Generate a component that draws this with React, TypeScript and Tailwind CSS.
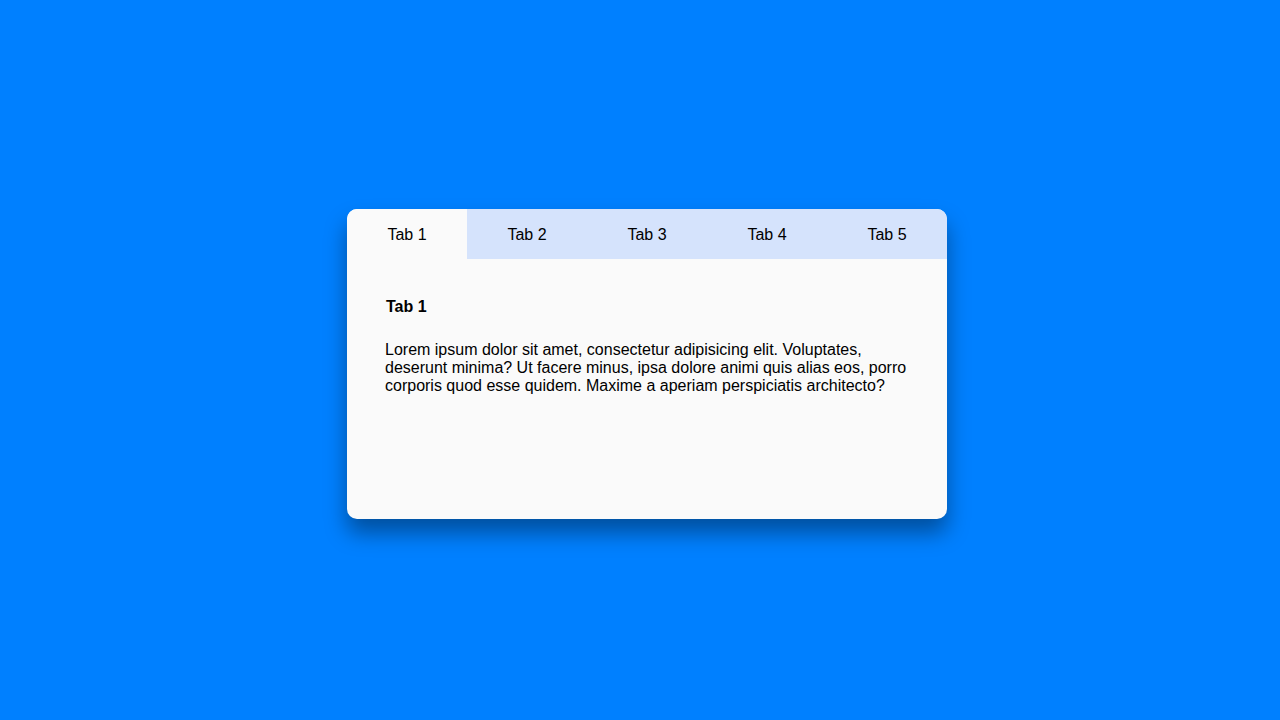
import { useState } from "react";

const tabs = ["Tab 1", "Tab 2", "Tab 3", "Tab 4", "Tab 5"];

const body =
  "Lorem ipsum dolor sit amet, consectetur adipisicing elit. Voluptates, deserunt minima? Ut facere minus, ipsa dolore animi quis alias eos, porro corporis quod esse quidem. Maxime a aperiam perspiciatis architecto?";

export default function App() {
  const [active, setActive] = useState(0);

  return (
    <div className="flex h-[720px] w-full items-center justify-center bg-[#0080ff] pl-[14px] pt-[8px] font-['Liberation_Sans',Arial,sans-serif] text-black">
      <div className="h-[310px] w-[600px] overflow-hidden rounded-[10px] bg-[#fafafa] shadow-[0_14px_22px_rgba(0,0,0,0.38)]">
        <div className="flex h-[50px]">
          {tabs.map((t, i) => (
            <button
              key={t}
              onClick={() => setActive(i)}
              className={`flex-1 pt-[2px] text-[16px] leading-[18px] ${
                i === active ? "bg-[#fafafa]" : "bg-[#d5e3fc]"
              }`}
            >
              {t}
            </button>
          ))}
        </div>
        <div className="px-[38px] pt-[39px]">
          <h3 className="pl-px text-[16px] font-bold leading-[18px]">{tabs[active]}</h3>
          <p className="mt-[25px] text-[16px] leading-[18px]">{body}</p>
        </div>
      </div>
    </div>
  );
}
